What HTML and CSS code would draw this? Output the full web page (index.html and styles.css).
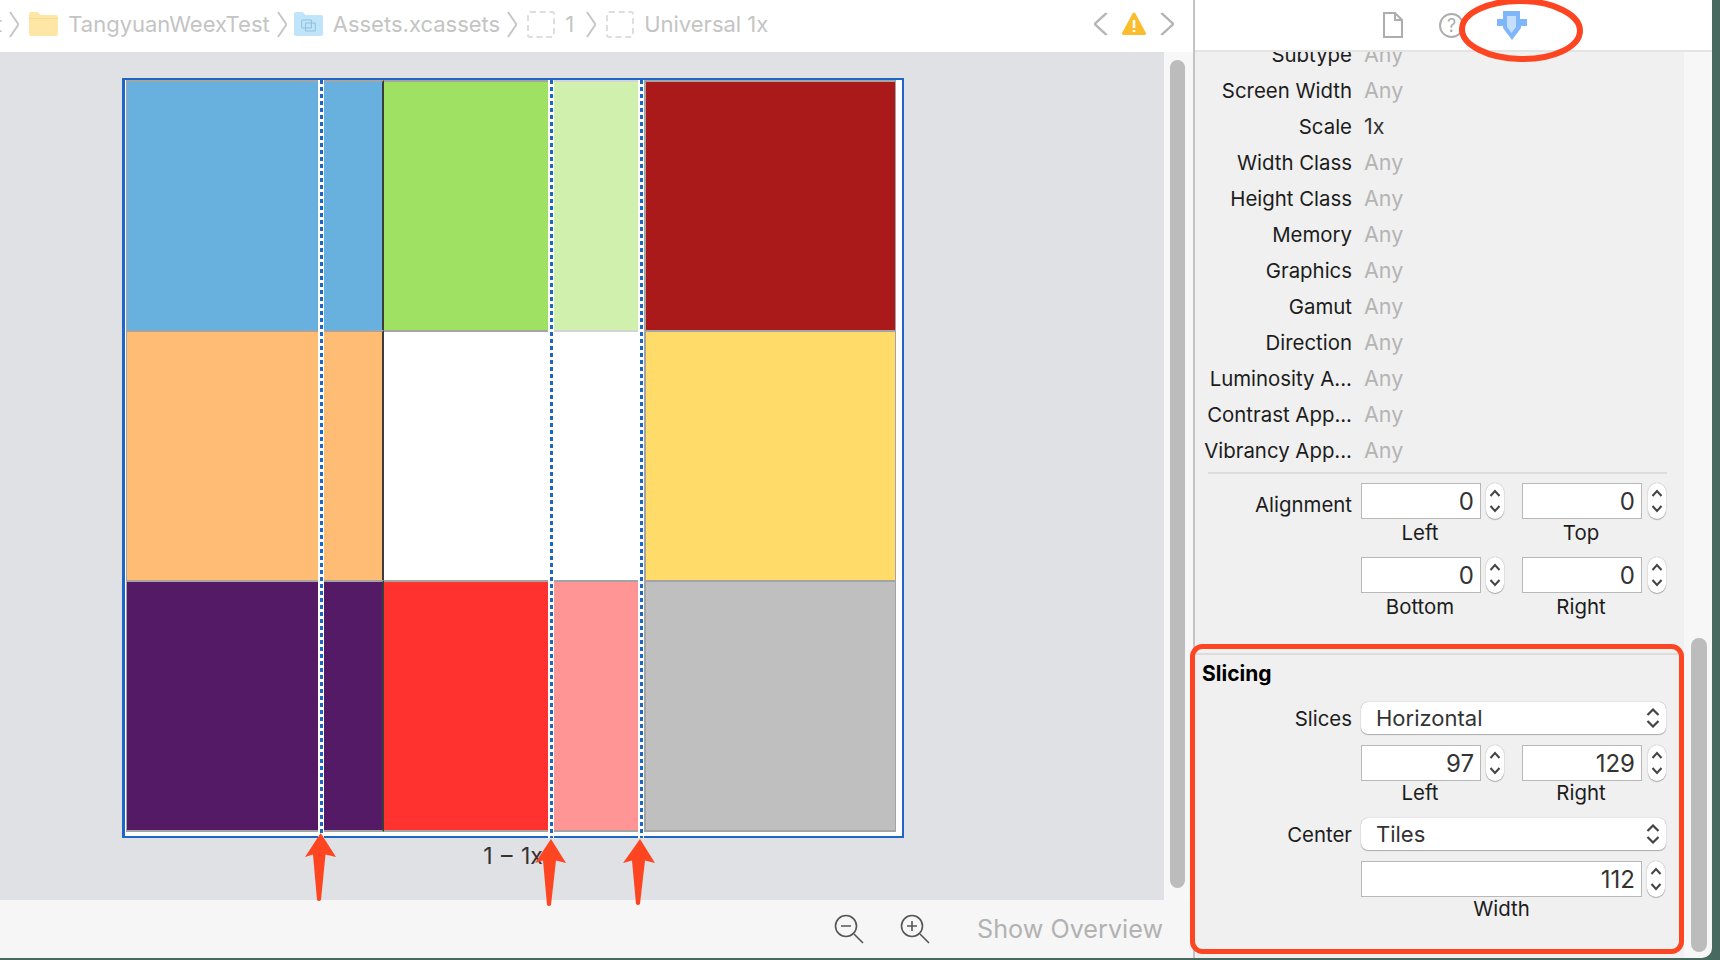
FILE: index.html
```html
<!DOCTYPE html>
<html lang="en">
<head>
    <meta charset="UTF-8">
    <title>Assets.xcassets</title>
    <link rel="stylesheet" href="styles.css">
</head>
<body>
    <svg class="defs" width="0" height="0">
        <symbol id="chev" viewBox="0 0 10 27" preserveAspectRatio="none"><path d="M1 1L9.500 13.500L1 26" fill="none" stroke="currentColor" stroke-width="2"/></symbol>
        <symbol id="step" viewBox="0 0 18 36"><path d="M4.500 13L9 8L13.500 13M4.500 23L9 28L13.500 23" fill="none" stroke="#444" stroke-width="2"/></symbol>
        <symbol id="updown" viewBox="0 0 14 20"><path d="M1.500 7L7 1.500L12.500 7M1.500 13L7 18.500L12.500 13" fill="none" stroke="#444" stroke-width="2.200"/></symbol>
    </svg>

    <div class="window">
        <div class="editor">
            <div class="toolbar">
                <div class="crumbs">
                    <span class="crumb-cut">t</span>
                    <svg class="chev"><use href="#chev"/></svg>
                    <svg class="folder" viewBox="0 0 30 24" preserveAspectRatio="none"><path d="M0 2a2 2 0 0 1 2-2h7l3 3h16a2 2 0 0 1 2 2v17a2 2 0 0 1-2 2H2a2 2 0 0 1-2-2z" fill="#fde6a6"/><path d="M0 6h30v1H0z" fill="#fbd98a"/></svg>
                    <span>TangyuanWeexTest</span>
                    <svg class="chev"><use href="#chev"/></svg>
                    <svg class="folder folder-assets" viewBox="0 0 30 24" preserveAspectRatio="none"><path d="M0 2a2 2 0 0 1 2-2h7l3 3h16a2 2 0 0 1 2 2v17a2 2 0 0 1-2 2H2a2 2 0 0 1-2-2z" fill="#c0e5fb"/><path d="M8 8h10v8H8zM12 11h10v8H12z" fill="none" stroke="#8dbfdc" stroke-width="1"/></svg>
                    <span>Assets.xcassets</span>
                    <svg class="chev"><use href="#chev"/></svg>
                    <div class="dashed"></div>
                    <span class="crumb-one">1</span>
                    <svg class="chev"><use href="#chev"/></svg>
                    <div class="dashed"></div>
                    <span>Universal 1x</span>
                </div>
                <div class="nav">
                    <svg class="nav-arrow nav-back"><use href="#chev"/></svg>
                    <svg class="warn" viewBox="0 0 24 24"><path d="M12 2L22.500 21.500H1.500Z" fill="#fbbd2e" stroke="#fbbd2e" stroke-width="3" stroke-linejoin="round"/><path d="M12 8V16M12 18V20" stroke="#fff" stroke-width="2.500"/></svg>
                    <svg class="nav-arrow"><use href="#chev"/></svg>
                </div>
            </div>

            <div class="middle">
                <div class="canvas">
                    <div class="asset">
                        <div class="frame">
                            <div class="slice-row">
                                <div class="cell cell-a c-blue"></div>
                                <div class="cell cell-b c-green"></div>
                                <div class="cell cell-c c-lightgreen"></div>
                                <div class="cell cell-d c-darkred"></div>
                            </div>
                            <div class="slice-row">
                                <div class="cell cell-a c-orange"></div>
                                <div class="cell cell-b c-white"></div>
                                <div class="cell cell-c c-white c-faint"></div>
                                <div class="cell cell-d c-yellow"></div>
                            </div>
                            <div class="slice-row">
                                <div class="cell cell-a c-purple"></div>
                                <div class="cell cell-b c-red"></div>
                                <div class="cell cell-c c-pink"></div>
                                <div class="cell cell-d c-gray"></div>
                            </div>
                            <div class="guide guide-1"></div>
                            <div class="guide guide-2"></div>
                            <div class="guide guide-3"></div>
                        </div>
                        <div class="asset-name">1 – 1x</div>
                    </div>
                </div>
                <div class="gutter"><div class="scroll-thumb"></div></div>
            </div>

            <div class="bottom-bar">
                <svg class="zoom-icon" viewBox="0 0 30 30"><circle cx="12" cy="12" r="10.500" fill="none" stroke="#555" stroke-width="1.600"/><path d="M7 12H17M20 20L29 29" stroke="#555" stroke-width="1.600" fill="none"/></svg>
                <svg class="zoom-icon" viewBox="0 0 30 30"><circle cx="12" cy="12" r="10.500" fill="none" stroke="#555" stroke-width="1.600"/><path d="M7 12H17M12 7V17M20 20L29 29" stroke="#555" stroke-width="1.600" fill="none"/></svg>
                <span class="overview">Show Overview</span>
            </div>
        </div>

        <div class="inspector">
            <div class="inspector-tabs">
                <svg class="tab-doc" viewBox="0 0 20 26"><path d="M1 1H12L19 8V25H1ZM12 1V8H19" fill="none" stroke="#adadad" stroke-width="2"/></svg>
                <div class="tab-help">?</div>
                <svg class="tab-pin" viewBox="0 0 30 29"><path d="M6 0H23V8H30V15H24V17L15 29L6 17V15H0V8H6Z" fill="#7fb6fa"/><path d="M10 5H19V16L14.500 22L10 16Z" fill="#fff" opacity="0.55"/></svg>
            </div>
            <div class="inspector-body">
                <div class="attrs">
                    <div class="attr-list">
                        <div class="attr"><label>Subtype</label><span class="val">Any</span></div>
                        <div class="attr"><label>Screen Width</label><span class="val">Any</span></div>
                        <div class="attr"><label>Scale</label><span class="val val-set">1x</span></div>
                        <div class="attr"><label>Width Class</label><span class="val">Any</span></div>
                        <div class="attr"><label>Height Class</label><span class="val">Any</span></div>
                        <div class="attr"><label>Memory</label><span class="val">Any</span></div>
                        <div class="attr"><label>Graphics</label><span class="val">Any</span></div>
                        <div class="attr"><label>Gamut</label><span class="val">Any</span></div>
                        <div class="attr"><label>Direction</label><span class="val">Any</span></div>
                        <div class="attr"><label>Luminosity A...</label><span class="val">Any</span></div>
                        <div class="attr"><label>Contrast App...</label><span class="val">Any</span></div>
                        <div class="attr"><label>Vibrancy App...</label><span class="val">Any</span></div>
                    </div>
                    <div class="sep"></div>

                    <div class="num-row first">
                        <label class="label-low">Alignment</label>
                        <div class="num">0</div>
                        <div class="stepper"><svg><use href="#step"/></svg></div>
                        <div class="num">0</div>
                        <div class="stepper"><svg><use href="#step"/></svg></div>
                    </div>
                    <div class="caption-row tall"><span>Left</span><span>Top</span></div>
                    <div class="num-row second">
                        <label></label>
                        <div class="num">0</div>
                        <div class="stepper"><svg><use href="#step"/></svg></div>
                        <div class="num">0</div>
                        <div class="stepper"><svg><use href="#step"/></svg></div>
                    </div>
                    <div class="caption-row tall"><span>Bottom</span><span>Right</span></div>

                    <div class="slicing">
                        <h2>Slicing</h2>
                        <div class="popup-row">
                            <label>Slices</label>
                            <div class="popup">Horizontal<svg><use href="#updown"/></svg></div>
                        </div>
                        <div class="num-row tight">
                            <label></label>
                            <div class="num">97</div>
                            <div class="stepper"><svg><use href="#step"/></svg></div>
                            <div class="num">129</div>
                            <div class="stepper"><svg><use href="#step"/></svg></div>
                        </div>
                        <div class="caption-row"><span>Left</span><span>Right</span></div>
                        <div class="popup-row center-row">
                            <label>Center</label>
                            <div class="popup">Tiles<svg><use href="#updown"/></svg></div>
                        </div>
                        <div class="num-row tight">
                            <label></label>
                            <div class="num num-wide">112</div>
                            <div class="stepper"><svg><use href="#step"/></svg></div>
                        </div>
                        <div class="caption-row"><span class="caption-wide">Width</span></div>
                    </div>
                </div>
                <div class="inspector-gutter"><div class="inspector-thumb"></div></div>
            </div>
        </div>
    </div>

    <!-- red marks drawn on top of the screenshot -->
    <svg class="marks" viewBox="0 0 1720 960">
        <ellipse cx="1521" cy="30" rx="59" ry="29" fill="none" stroke="#fd4521" stroke-width="6" transform="rotate(1 1521 30)"/>
        <rect x="1192.500" y="646.500" width="489" height="305" rx="10" fill="none" stroke="#fd4521" stroke-width="5"/>
        <path d="M320.700 833L336 857L325.500 854.500L321 900Q319 902 317 900L313 854.500L305 857Z" fill="#fd4521"/>
        <path d="M551 839L566 863L556 860.500L551 905Q549 907 547 905L543 860.500L535 863Z" fill="#fd4521"/>
        <path d="M640 839L655 863L645 860.500L640 904Q638 906 636 904L632 860.500L623 863Z" fill="#fd4521"/>
    </svg>
</body>
</html>
```

FILE: styles.css
```css
* {
    box-sizing: border-box;
}
body {
    margin: 0;
    width: 1720px;
    height: 960px;
    overflow: hidden;
    position: relative;
    background-color: #47695f;
    font-family: Inter, "Noto Sans", sans-serif;
    font-size: 20.4px;
    color: #1c1c1c;
}
.defs {
    position: absolute;
}
.window {
    display: flex;
    width: 1712px;
    height: 958px;
    background-color: #f7f7f7;
    border-bottom-right-radius: 10px;
    overflow: hidden;
}

/* left side */
.editor {
    width: 1195px;
    display: flex;
    flex-direction: column;
    border-right: 2px solid #c4c4c4;
}
.toolbar {
    height: 52px;
    background-color: #ffffff;
    display: flex;
    align-items: center;
    justify-content: space-between;
    padding-right: 19px;
    padding-bottom: 4px;
    overflow: hidden;
}
.crumbs {
    display: flex;
    align-items: center;
    gap: 10px;
    font-size: 22px;
    color: #c4c4c4;
}
.crumb-cut {
    margin-left: -5px;
}
.crumb-one {
    margin-right: 5px;
}
.chev {
    width: 10px;
    height: 27px;
    margin-left: -3px;
    color: #c6c6c6;
}
.folder {
    width: 29px;
    height: 24px;
}
.folder-assets {
    margin-left: -3px;
}
.dashed {
    width: 28px;
    height: 27px;
    border: 2px dashed #dedede;
    border-radius: 3px;
}
.nav {
    display: flex;
    align-items: center;
    gap: 14px;
}
.nav-arrow {
    width: 14px;
    height: 24px;
    color: #b4b4b4;
}
.nav-back {
    transform: scaleX(-1);
}
.warn {
    width: 24px;
    height: 24px;
}
.middle {
    flex: 1;
    display: flex;
    min-height: 0;
}
.canvas {
    width: 1164px;
    background-color: #e0e1e5;
    padding: 26px 0 0 122px;
}
.gutter {
    flex: 1;
    padding: 8px 0 12px 6px;
}
.scroll-thumb {
    width: 15px;
    height: 100%;
    background-color: #bcbcbc;
    border-radius: 8px;
}
.asset {
    width: 782px;
}
.frame {
    position: relative;
    height: 760px;
    background-color: #ffffff;
    border: 2px solid #1e66c6;
    border-left-width: 3px;
    padding-left: 1px;
}
.slice-row {
    display: flex;
    width: 770px;
}
.cell {
    height: 250px;
    border-top: 2px solid #a4a4a4;
}
.cell-a {
    width: 258px;
    border-left: 1px solid #a4a4a4;
    border-right: 2px solid #3c3c3c;
}
.cell-b {
    width: 170px;
}
.cell-c {
    width: 90px;
}
.cell-d {
    width: 252px;
    border-left: 2px solid #a4a4a4;
    border-right: 1px solid #a4a4a4;
}
.slice-row:nth-child(3) .cell {
    height: 252px;
    border-bottom: 2px solid #a4a4a4;
}
.c-blue { background-color: #68b0de; }
.c-green { background-color: #9fe162; }
.c-lightgreen { background-color: #d0f0ae; border-top-color: #d4d4d4; }
.c-darkred { background-color: #aa1a1b; }
.c-orange { background-color: #ffbc75; }
.c-white { background-color: #ffffff; }
.c-faint { border-top-color: #d4d4d4; }
.c-yellow { background-color: #ffdc69; }
.c-purple { background-color: #541a66; }
.c-red { background-color: #ff322f; }
.c-pink { background-color: #ff9595; }
.c-gray { background-color: #bfbfbf; }
.guide {
    position: absolute;
    top: 0;
    bottom: -2px;
    width: 6px;
    background-color: #ffffff;
}
.guide::after {
    content: "";
    position: absolute;
    top: 0;
    bottom: 0;
    left: 2px;
    width: 3px;
    background: repeating-linear-gradient(to bottom, #1e66c6 0, #1e66c6 4px, #ffffff 4px, #ffffff 7px);
}
.guide-1 { left: 193px; }
.guide-2 { left: 423px; }
.guide-3 { left: 513px; }
.asset-name {
    text-align: center;
    line-height: 36px;
    font-size: 23px;
    word-spacing: 2px;
    color: #333333;
}
.bottom-bar {
    height: 58px;
    background-color: #f6f6f6;
    display: flex;
    align-items: center;
    justify-content: flex-end;
    padding-right: 30px;
}
.zoom-icon {
    width: 30px;
    height: 30px;
    margin-right: 36px;
}
.zoom-icon + .zoom-icon {
    margin-right: 47px;
}
.overview {
    font-size: 25.2px;
    color: #b2b2b2;
}

/* right side */
.inspector {
    flex: 1;
    display: flex;
    flex-direction: column;
    min-width: 0;
}
.inspector-tabs {
    height: 52px;
    background-color: #ffffff;
    border-bottom: 2px solid #e4e4e4;
    display: flex;
    align-items: center;
    padding-left: 188px;
    flex-shrink: 0;
    position: relative;
}
.tab-doc {
    width: 20px;
    height: 26px;
}
.tab-help {
    width: 25px;
    height: 25px;
    margin-left: 36px;
    border: 2px solid #adadad;
    border-radius: 50%;
    color: #adadad;
    font-size: 18px;
    line-height: 21px;
    text-align: center;
}
.tab-pin {
    width: 30px;
    height: 29px;
    margin-left: 33px;
}
.inspector-body {
    flex: 1;
    display: flex;
    min-height: 0;
}
.attrs {
    width: 489px;
    background-color: #f0f0f0;
}
.attr-list {
    margin-top: -16px;
}
.attr {
    display: flex;
    align-items: center;
    height: 36px;
}
label {
    width: 157px;
    flex-shrink: 0;
    text-align: right;
    white-space: nowrap;
}
.val {
    margin-left: 12px;
    font-size: 21.5px;
    color: #b4b4b4;
}
.val-set {
    color: #333333;
}
.sep {
    height: 2px;
    margin: 4px 17px 0 13px;
    background-color: #dcdcdc;
}
.num-row {
    display: flex;
    align-items: center;
    height: 36px;
}
.num-row.first {
    margin-top: 9px;
}
.num-row.second {
    margin-top: 10px;
}
.num-row.tight {
    margin-top: 11px;
}
.label-low {
    padding-top: 6px;
}
.num {
    width: 120px;
    height: 36px;
    margin-left: 9px;
    padding-right: 6px;
    background-color: #ffffff;
    border: 1px solid #b8b8b8;
    text-align: right;
    font-size: 24px;
    line-height: 36px;
    color: #333333;
}
.num-wide {
    width: 281px;
}
.stepper {
    width: 18px;
    height: 36px;
    margin-left: 5px;
    background-color: #ffffff;
    border-radius: 9px;
    box-shadow: 0 0 1px #8a8a8a, 0 1px 1px #b0b0b0;
}
.stepper svg {
    display: block;
    width: 18px;
    height: 36px;
}
.stepper + .num {
    margin-left: 18px;
}
.stepper + .num + .stepper {
    margin-left: 6px;
}
.caption-row {
    display: flex;
    padding-left: 165px;
    height: 24px;
    line-height: 24px;
}
.caption-row.tall {
    height: 28px;
    line-height: 28px;
}
.caption-row span {
    width: 120px;
    text-align: center;
}
.caption-row span + span {
    margin-left: 41px;
}
.caption-row .caption-wide {
    width: 283px;
}
.slicing {
    margin-top: 32px;
    border-top: 2px solid #dcdcdc;
}
.slicing h2 {
    margin: 0;
    height: 36px;
    padding-left: 7px;
    font-size: 21px;
    line-height: 37px;
    font-weight: 700;
    color: #000000;
}
.popup-row {
    display: flex;
    align-items: center;
    margin-top: 11px;
}
.center-row {
    margin-top: 13px;
}
.popup {
    width: 305px;
    height: 32px;
    margin-left: 9px;
    padding: 0 6px 0 15px;
    display: flex;
    align-items: center;
    justify-content: space-between;
    background-color: #ffffff;
    border-radius: 7px;
    box-shadow: 0 0 1px #8a8a8a, 0 1px 1px #b0b0b0;
    font-size: 22px;
    color: #333333;
}
.popup svg {
    width: 14px;
    height: 20px;
}
.inspector-gutter {
    flex: 1;
    padding: 586px 0 6px 7px;
}
.inspector-thumb {
    width: 16px;
    height: 100%;
    background-color: #bcbcbc;
    border-radius: 8px;
}

/* annotations */
.marks {
    position: absolute;
    left: 0;
    top: 0;
    width: 1720px;
    height: 960px;
    pointer-events: none;
}
```
